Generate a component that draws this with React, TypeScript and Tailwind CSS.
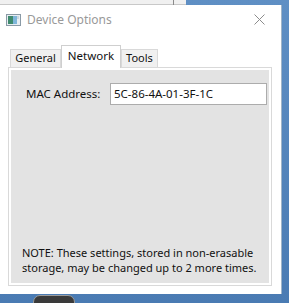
import React from 'react';

function AppIcon() {
  return (
    <svg width="15" height="12" viewBox="0 0 15 12">
      <rect x="0.5" y="0.5" width="14" height="11" fill="#e8eef2" stroke="#8a9aa6" />
      <rect x="2" y="2" width="5" height="8" fill="#3f8a6e" />
      <rect x="7" y="2" width="4" height="8" fill="#7fb6d9" />
      <rect x="11" y="2" width="2" height="3" fill="#c9d6df" />
    </svg>
  );
}

function CloseIcon() {
  return (
    <svg width="11" height="11" viewBox="0 0 11 11">
      <path d="M0.5 0.5 L10.5 10.5 M10.5 0.5 L0.5 10.5" stroke="#8c8c8c" strokeWidth="1" />
    </svg>
  );
}

export default function App() {
  const font = { fontFamily: '"Noto Sans", "Open Sans", sans-serif' };

  return (
    <div className="relative w-[289px] h-[303px] overflow-hidden bg-gradient-to-b from-[#5f8fc4] to-[#4a7bb3]" style={font}>
      {/* desktop window behind, top */}
      <div className="absolute left-0 top-0 w-[186px] h-[5px] bg-[#f0f0f0] border-b border-[#c8c8c8]">
        <div className="absolute left-[173px] top-0 w-px h-[5px] bg-[#8a8a8a]" />
      </div>
      {/* taskbar thing at bottom */}
      <div className="absolute left-[33px] top-[295px] w-[42px] h-[14px] rounded-t-[7px] bg-[#3a3a3a] border border-[#9a9a9a]" />

      {/* Dialog */}
      <div className="absolute left-0 top-[5px] w-[282px] h-[289px] bg-white border-r border-[#9fb4c8] flex flex-col text-[11px] text-[#111111]">
        {/* title bar */}
        <div className="h-[29px] flex items-center pl-[6px] pr-[8px]">
          <AppIcon />
          <span className="ml-[6px] text-[#999999] text-[12px]">Device Options</span>
          <div className="ml-auto mr-[8px] flex items-center">
            <CloseIcon />
          </div>
        </div>

        {/* tabs */}
        <div className="mt-[11px] ml-[8px] w-[264px] flex flex-col">
          <div className="flex items-end h-[22px] pl-[2px]">
            <div className="w-[51px] h-[18px] bg-[#f0f0f0] border border-b-0 border-[#d9d9d9] flex items-center justify-center">
              General
            </div>
            <div className="relative z-10 -mb-px w-[60px] h-[23px] bg-white border border-b-0 border-[#cfcfcf] flex items-center justify-center pb-[3px] text-[11.5px]">
              Network
            </div>
            <div className="w-[37px] h-[18px] bg-[#f0f0f0] border border-b-0 border-[#d9d9d9] flex items-center justify-center">
              Tools
            </div>
          </div>
          <div className="h-[219px] border border-[#d9d9d9] bg-white p-[2px]">
            <div className="h-full bg-[#e3e3e3] flex flex-col">
              <div className="mt-[13px] flex items-center h-[22px]">
                <span className="ml-[15px] w-[84px] text-[11.5px]">MAC Address:</span>
                <div className="w-[157px] h-[22px] bg-white border border-[#acacac] flex items-center pl-[3px] text-[11.5px]">
                  5C-86-4A-01-3F-1C
                </div>
              </div>
              <div className="mt-auto mb-[8px] pl-[11px] leading-[15px] whitespace-nowrap">
                NOTE: These settings, stored in non-erasable
                <br />
                storage, may be changed up to 2 more times.
              </div>
            </div>
          </div>
        </div>
      </div>
    </div>
  );
}
